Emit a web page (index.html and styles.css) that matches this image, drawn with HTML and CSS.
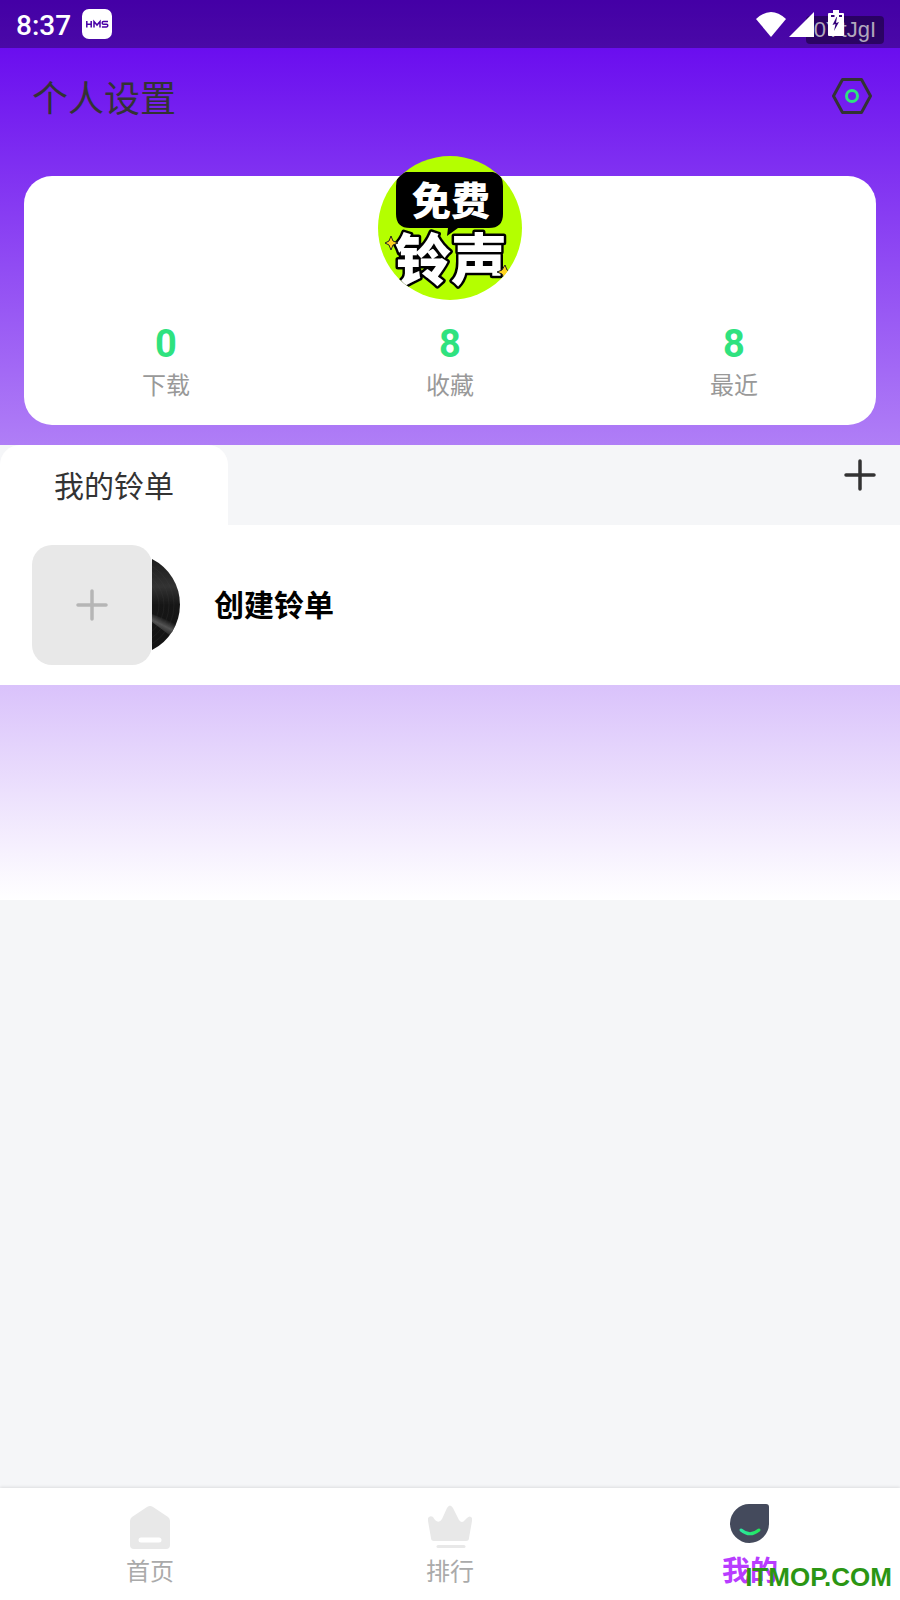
FILE: index.html
```html
<!DOCTYPE html>
<html lang="zh-CN">
<head>
    <meta charset="UTF-8">
    <meta name="viewport" content="width=device-width, initial-scale=1.0">
    <title>个人设置</title>
    <link rel="stylesheet" href="styles.css">
</head>
<body>

    <div class="status-bar">
        <span class="clock">8:37</span>
        <svg class="hms" width="30" height="30" viewBox="0 0 30 30">
            <rect width="30" height="30" rx="7" fill="#fff"/>
            <g fill="none" stroke="#4800a6" stroke-width="1.5">
                <path d="M4.8 12v6.5M9.2 12v6.5M4.8 15.2h4.4"/>
                <path d="M12 18.5V12.5l3 3.5l3-3.5v6"/>
                <path d="M26 12.6h-4.5q-1.3 0-1.3 1.3t1.3 1.3h3q1.3 0 1.3 1.3t-1.3 1.4h-4.6"/>
            </g>
        </svg>
        <div class="tag">0YtJgI</div>
        <svg class="signals" width="90" height="28" viewBox="0 0 90 28" fill="#fff">
            <path d="M0 9Q15-5 30 9L15 27Z"/>
            <path d="M33 27L58 2V27Z"/>
            <path d="M77 0h6v3h4q1 0 1 1v21q0 1-1 1H73q-1 0-1-1V4q0-1 1-1H77Z"/>
            <path d="M75 6h3.500M83 6h3" stroke="#33007a" stroke-width="2"/>
            <path d="M80.500 7l-4 8l3-1l-1.500 7l5-9l-3 1l1-6Z" fill="#33007a"/>
        </svg>
    </div>

    <main class="page">
        <header class="header">
            <h1>个人设置</h1>
            <button class="icon-btn" aria-label="设置">
                <svg width="40" height="36" viewBox="0 0 40 36" fill="none">
                    <path d="M10.500 1.500h19L38.500 18l-9 16.500h-19L1.500 18Z" stroke="#333" stroke-width="3" stroke-linejoin="round"/>
                    <circle cx="20" cy="18" r="5.500" stroke="#2fe27f" stroke-width="3"/>
                </svg>
            </button>
        </header>

        <section class="card">
            <svg class="avatar" width="144" height="144" viewBox="0 0 144 144">
                <defs>
                    <clipPath id="round"><circle cx="72" cy="72" r="72"/></clipPath>
                </defs>
                <g clip-path="url(#round)">
                    <rect width="144" height="144" fill="#b4ff00"/>
                    <path d="M28 16H115Q125 18 125 30V58Q125 72 111 72H80L69 80L70 72H32Q18 72 18 58V30Q18 18 28 16Z" fill="#000"/>
                    <text class="logo-top" x="73" y="59">免费</text>
                    <text class="logo-bottom" x="73" y="124">铃声</text>
                    <path d="M13 80l2 5l5 2l-5 2l-2 5l-2-5l-4-2l4-2Z" fill="#ffd21f" stroke="#222" stroke-width="1"/>
                    <path d="M127 109l2 5l4 2l-4 2l-3 4l-2-4l-5-2l5-2Z" fill="#ffd21f" stroke="#222" stroke-width="1"/>
                </g>
            </svg>
            <div class="stats">
                <div class="stat"><b>0</b><span>下载</span></div>
                <div class="stat"><b>8</b><span>收藏</span></div>
                <div class="stat"><b>8</b><span>最近</span></div>
            </div>
        </section>

        <div class="tabs">
            <h2 class="tab">我的铃单</h2>
            <button class="icon-btn add" aria-label="添加">
                <svg width="32" height="32" viewBox="0 0 32 32" stroke="#333" stroke-width="3.5" stroke-linecap="round">
                    <path d="M2 16h28M16 2v28"/>
                </svg>
            </button>
        </div>

        <button class="create">
            <span class="cover">
                <svg width="32" height="32" viewBox="0 0 32 32" stroke="#b5b5b5" stroke-width="3.5" stroke-linecap="round">
                    <path d="M2 16h28M16 2v28"/>
                </svg>
            </span>
            <svg class="disc" width="28" height="92" viewBox="0 0 28 92">
                <defs>
                    <linearGradient id="vinyl" x1="0" y1="0" x2="0" y2="1">
                        <stop offset="0" stop-color="#1c1c1c"/>
                        <stop offset=".3" stop-color="#333"/>
                        <stop offset=".5" stop-color="#171717"/>
                        <stop offset="1" stop-color="#141414"/>
                    </linearGradient>
                    <linearGradient id="shine" gradientUnits="userSpaceOnUse" x1="14" y1="60" x2="7" y2="74">
                        <stop offset="0" stop-color="#555" stop-opacity="0"/>
                        <stop offset=".45" stop-color="#555"/>
                        <stop offset="1" stop-color="#555" stop-opacity="0"/>
                    </linearGradient>
                    <clipPath id="edge"><path d="M0 0A51 51 0 0 1 0 91Z"/></clipPath>
                </defs>
                <g clip-path="url(#edge)">
                    <rect width="28" height="92" fill="url(#vinyl)"/>
                    <path d="M0 55L28 66V84L0 63Z" fill="url(#shine)"/>
                    <g fill="none" stroke="#444" stroke-width="1" opacity=".2">
                        <circle cx="-23" cy="46" r="30"/>
                        <circle cx="-23" cy="46" r="35"/>
                        <circle cx="-23" cy="46" r="40"/>
                        <circle cx="-23" cy="46" r="45"/>
                    </g>
                </g>
            </svg>
            <span class="create-text">创建铃单</span>
        </button>
    </main>

    <nav class="nav">
        <a href="#">
            <svg width="44" height="48" viewBox="0 0 44 48">
                <path d="M19 3Q22 1 25 3L40 13Q42 14.500 42 17V41Q42 45 38 45H6Q2 45 2 41V17Q2 14.500 4 13Z" fill="#e8e8e8"/>
                <path d="M13 36h18" stroke="#fff" stroke-width="5" stroke-linecap="round"/>
            </svg>
            <span>首页</span>
        </a>
        <a href="#">
            <svg width="44" height="48" viewBox="0 0 44 48">
                <path d="M19 4Q22-1 25 4L31 16Q34 20 37 16L39 14Q42 11 44 14V17L41 34Q41 37 38 37H6Q3 37 3 34L0 17V14Q2 11 5 13L7 16Q11 20 14 15Z" fill="#e8e8e8"/>
                <path d="M10 42.500h26" stroke="#e8e8e8" stroke-width="3" stroke-linecap="round"/>
            </svg>
            <span>排行</span>
        </a>
        <a href="#" class="active">
            <svg width="44" height="48" viewBox="0 0 44 48">
                <defs>
                    <linearGradient id="smile"><stop stop-color="#2ce8a0"/><stop offset="1" stop-color="#22e85a"/></linearGradient>
                </defs>
                <path d="M22 0H38Q41 0 41 3V19.500A19.500 19.500 0 1 1 22 0Z" fill="#444a5c"/>
                <path d="M13 26Q22 33.500 31 26" fill="none" stroke="url(#smile)" stroke-width="3" stroke-linecap="round"/>
            </svg>
            <span>我的</span>
        </a>
        <div class="watermark">ITMOP.COM</div>
    </nav>

</body>
</html>
```

FILE: styles.css
```css
* {
    box-sizing: border-box;
}
body {
    margin: 0;
    min-height: 100vh;
    display: flex;
    flex-direction: column;
    font-family: Roboto, "Noto Sans CJK SC", sans-serif;
    color: #333;
    background: #f5f6f8 linear-gradient(#6200ee, #fff) no-repeat top / 100% 900px;
}
h1, h2 {
    margin: 0;
    font-weight: 400;
}
button {
    padding: 0;
    border: none;
    background: none;
    font-family: inherit;
    color: inherit;
    cursor: pointer;
}
svg {
    display: block;
}
.status-bar {
    position: relative;
    display: flex;
    align-items: center;
    gap: 11px;
    height: 48px;
    padding: 0 16px;
    background: rgba(0, 0, 0, 0.3);
    color: #fff;
}
.clock {
    padding-top: 4px;
    font-size: 28px;
    font-weight: 500;
    line-height: 44px;
}
.tag {
    margin-left: auto;
    margin-top: 12px;
    padding: 0 8px;
    border-radius: 4px;
    font-family: "Liberation Sans", sans-serif;
    font-size: 22px;
    line-height: 28px;
    color: #b0a8bc;
    background: rgba(0, 0, 0, 0.4);
}
.signals {
    position: absolute;
    top: 10px;
    right: 54px;
}
.page {
    flex: 1;
}
.header {
    display: flex;
    align-items: center;
    justify-content: space-between;
    height: 96px;
    padding: 0 28px 0 32px;
}
.header h1 {
    font-size: 36px;
}
.card {
    position: relative;
    margin: 32px 24px 20px;
    padding: 144px 0 21px;
    border-radius: 28px;
    background: #fff;
}
.avatar {
    position: absolute;
    top: -20px;
    left: 50%;
    transform: translateX(-50%);
}
.logo-top, .logo-bottom {
    font-family: "Noto Sans CJK SC", sans-serif;
    font-weight: 900;
    text-anchor: middle;
    fill: #fff;
}
.logo-top {
    font-size: 39px;
}
.logo-bottom {
    font-size: 56px;
    stroke: #000;
    stroke-width: 5px;
    stroke-linejoin: round;
    paint-order: stroke;
}
.stats {
    display: flex;
}
.stat {
    flex: 1;
    display: flex;
    flex-direction: column;
    align-items: center;
}
.stat b {
    font-size: 38px;
    line-height: 48px;
    color: #2fe27f;
}
.stat span {
    font-size: 24px;
    line-height: 36px;
    color: #999;
}
.tabs {
    display: flex;
    align-items: flex-start;
    justify-content: space-between;
    padding-right: 24px;
    background: #f5f6f8;
}
.tab {
    padding: 4px 54px 0;
    border-radius: 20px 20px 0 0;
    font-size: 30px;
    line-height: 76px;
    background: #fff;
}
.add {
    margin-top: 14px;
}
.create {
    display: flex;
    align-items: center;
    width: 100%;
    padding: 20px 32px;
    background: #fff;
}
.cover {
    display: flex;
    align-items: center;
    justify-content: center;
    width: 120px;
    height: 120px;
    border-radius: 20px;
    background: #e8e8e8;
}
.create-text {
    margin-left: 34px;
    padding-bottom: 4px;
    font-size: 30px;
    font-weight: 700;
    color: #000;
}
.nav {
    position: relative;
    display: flex;
    height: 112px;
    background: #fff;
    box-shadow: 0 -1px 3px rgba(0, 0, 0, 0.1);
}
.nav a {
    flex: 1;
    display: flex;
    flex-direction: column;
    align-items: center;
    gap: 2px;
    padding-top: 16px;
    font-size: 24px;
    line-height: 36px;
    color: #aaa;
    text-decoration: none;
}
.nav .active {
    font-size: 28px;
    font-weight: 700;
    color: #b83cff;
}
.watermark {
    position: absolute;
    right: 8px;
    bottom: 8px;
    font-family: "Liberation Sans", sans-serif;
    font-size: 26px;
    font-weight: 700;
    line-height: 30px;
    color: #2b9614;
}
```
